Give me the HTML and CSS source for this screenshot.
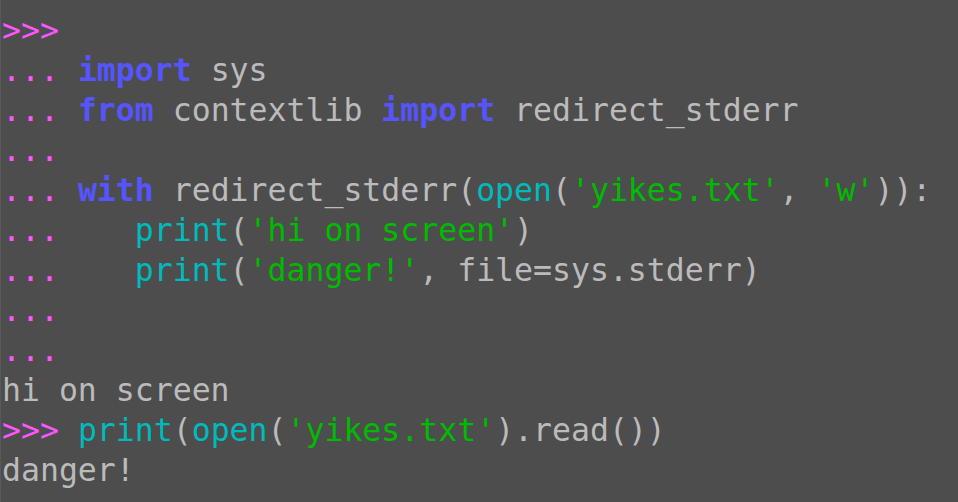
FILE: index.html
```html
<!DOCTYPE html>
<html>
<head>
<meta charset="utf-8">
<link rel="stylesheet" href="styles.css">
</head>
<body>
<pre class="term"><span class="p">&gt;&gt;&gt;</span>
<span class="p">...</span> <span class="k">import</span> sys
<span class="p">...</span> <span class="k">from</span> contextlib <span class="k">import</span> redirect_stderr
<span class="p">...</span>
<span class="p">...</span> <span class="k">with</span> redirect_stderr(<span class="b">open</span>(<span class="s">'yikes.txt'</span>, <span class="s">'w'</span>)):
<span class="p">...</span>    <span class="b">print</span>(<span class="s">'hi on screen'</span>)
<span class="p">...</span>    <span class="b">print</span>(<span class="s">'danger!'</span>, file=sys.stderr)
<span class="p">...</span>
<span class="p">...</span>
hi on screen
<span class="p">&gt;&gt;&gt;</span> <span class="b">print</span>(<span class="b">open</span>(<span class="s">'yikes.txt'</span>).read())
danger!</pre>
</body>
</html>
```
FILE: styles.css
```css
html, body {
  margin: 0;
  padding: 0;
  background: #4d4d4d;
  height: 100%;
  overflow: hidden;
}
.term {
  margin: 0;
  padding: 10px 0 0 1px;
  border-left: 1px solid #5a5a5a;
  min-height: 100%;
  box-sizing: border-box;
  font-family: "DejaVu Sans Mono", monospace;
  font-size: 31.5px;
  line-height: 40px;
  color: #bbbbbb;
}
.p { color: #ff55ff; }
.k { color: #5555ff; font-weight: bold; }
.b { color: #00bbbb; }
.s { color: #00bb00; }
```
